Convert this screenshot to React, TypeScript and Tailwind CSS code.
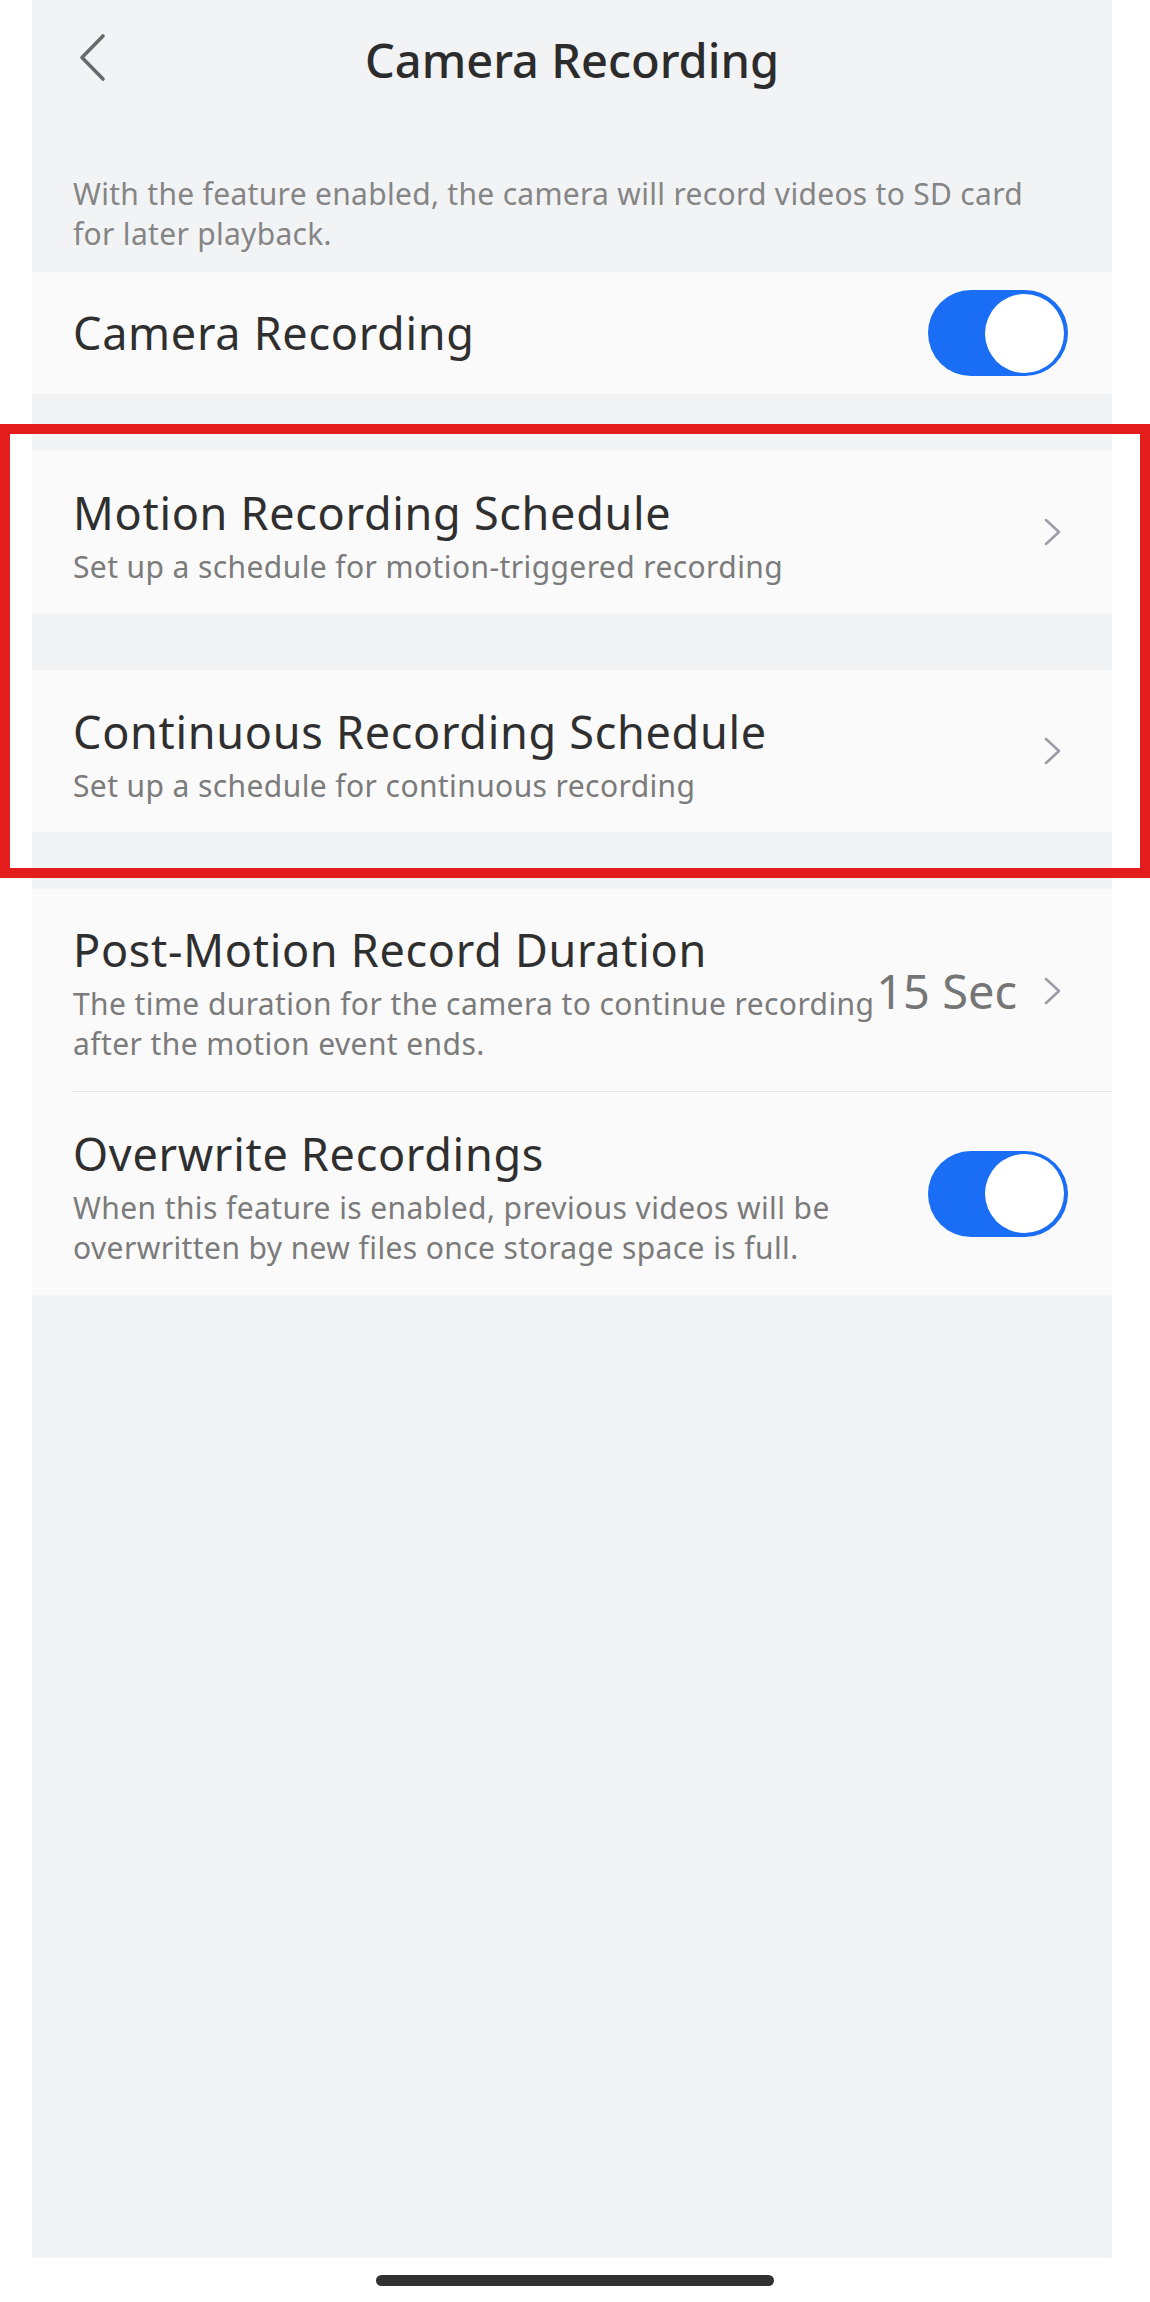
function Toggle() {
	return (
		<div className="w-[140px] h-[86px] rounded-full bg-[#1a6df5] flex items-center justify-end pr-[4px]">
			<div className="w-[79px] h-[79px] rounded-full bg-white" />
		</div>
	);
}

function Chevron() {
	return (
		<svg width="20" height="30" viewBox="0 0 20 30" className="shrink-0" fill="none">
			<path d="M3 3 L16 15 L3 27" stroke="#9c9da6" strokeWidth="2.6" strokeLinecap="round" strokeLinejoin="round" />
		</svg>
	);
}

interface LinkRowProps {
	title: string;
	subtitle: string;
}

function LinkRow({ title, subtitle }: LinkRowProps) {
	return (
		<div className="h-[162px] bg-[#fafafa] pl-[41px] pr-[49px] flex items-center justify-between">
			<div className="pt-[2px]">
				<div className="text-[45px] leading-[68px] tracking-[0.7px] text-[#2f2f2f]">{title}</div>
				<div className="text-[30px] leading-[40px] tracking-[0.4px] text-[#7b7b7b]">{subtitle}</div>
			</div>
			<Chevron />
		</div>
	);
}

export default function App() {
	return (
		<div className="relative w-[1150px] h-[2302px] bg-white font-['Noto_Sans',sans-serif]">
			<div className="ml-[32px] w-[1080px] h-[2258px] bg-[#f2f3f5] flex flex-col">
				<div className="relative h-[120px] flex items-center justify-center">
					<svg
						width="30"
						height="50"
						viewBox="0 0 30 50"
						className="absolute left-[46px] top-[33px]"
						fill="none"
					>
						<path d="M25 3 L4 24.5 L25 46" stroke="#6a6a6a" strokeWidth="3.6" strokeLinecap="round" strokeLinejoin="round" />
					</svg>
					<div className="text-[47px] font-medium text-[#2c2c2c]">Camera Recording</div>
				</div>

				<div className="pl-[41px] pt-[54px] pb-[18px] text-[30px] leading-[40px] tracking-[0.3px] text-[#858585]">
					With the feature enabled, the camera will record videos to SD card
					<br />
					for later playback.
				</div>

				<div className="h-[122px] bg-[#fafafa] pl-[41px] pr-[44px] flex items-center justify-between">
					<div className="text-[45px] tracking-[0.7px] text-[#2f2f2f]">Camera Recording</div>
					<Toggle />
				</div>

				<div className="h-[57px]" />
				<LinkRow
					title="Motion Recording Schedule"
					subtitle="Set up a schedule for motion-triggered recording"
				/>
				<div className="h-[57px]" />
				<LinkRow
					title="Continuous Recording Schedule"
					subtitle="Set up a schedule for continuous recording"
				/>
				<div className="h-[57px]" />

				<div className="bg-[#fafafa]">
					<div className="h-[202px] pl-[41px] pr-[49px] flex items-center">
						<div className="whitespace-nowrap shrink-0">
							<div className="text-[45px] leading-[68px] tracking-[0.7px] text-[#2f2f2f]">
								Post-Motion Record Duration
							</div>
							<div className="text-[30px] leading-[40px] tracking-[0.4px] text-[#7b7b7b]">
								The time duration for the camera to continue recording
								<br />
								after the motion event ends.
							</div>
						</div>
						<div className="ml-auto flex items-center gap-[26px] mt-[2px] whitespace-nowrap shrink-0">
							<span className="text-[47px] text-[#757575]">15 Sec</span>
							<Chevron />
						</div>
					</div>
					<div className="ml-[40px] h-px bg-[#e4e4e6]" />
					<div className="h-[203px] pl-[41px] pr-[44px] flex items-center justify-between">
						<div className="whitespace-nowrap">
							<div className="text-[45px] leading-[68px] tracking-[0.7px] text-[#2f2f2f]">
								Overwrite Recordings
							</div>
							<div className="text-[30px] leading-[40px] tracking-[0.4px] text-[#7b7b7b]">
								When this feature is enabled, previous videos will be
								<br />
								overwritten by new files once storage space is full.
							</div>
						</div>
						<Toggle />
					</div>
				</div>
			</div>

			<div className="mt-[17px] mx-auto w-[398px] h-[11px] rounded-full bg-[#313131]" />

			<div className="absolute left-0 top-[424px] w-[1150px] h-[454px] border-[10px] border-[#e31c1c] pointer-events-none" />
		</div>
	);
}
